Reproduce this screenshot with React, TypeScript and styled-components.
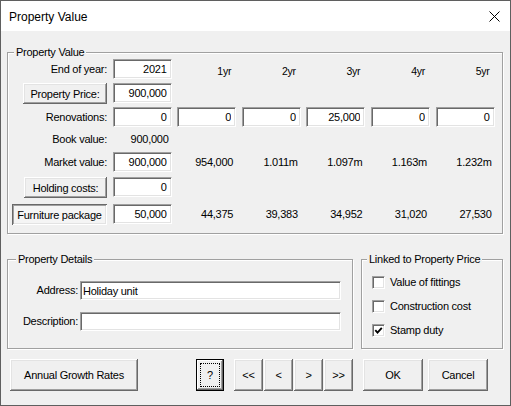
import React from "react";
import styled, { createGlobalStyle, css } from "styled-components";

const Global = createGlobalStyle`
  html, body { margin: 0; padding: 0; background: #ffffff; }
  body {
    font-family: "Liberation Sans", Arial, sans-serif;
    font-size: 11px;
    letter-spacing: -0.25px;
    color: #000;
  }
  *, *::before, *::after { box-sizing: border-box; }
`;

const Window = styled.div`
  width: 511px;
  height: 406px;
  border: 1px solid #5f5f5f;
  background: #f0f0f0;
  display: flex;
  flex-direction: column;
  overflow: hidden;
`;

const TitleBar = styled.div`
  height: 30px;
  flex: none;
  background: #ffffff;
  display: flex;
  align-items: center;
  justify-content: space-between;
  padding: 0 10px 0 8px;
`;

const Title = styled.span`
  font-size: 12px;
  line-height: 16px;
  letter-spacing: 0;
  padding-top: 1px;
`;

const CloseGlyph = styled.svg`
  display: block;
  width: 11px;
  height: 11px;
`;

const Body = styled.div`
  flex: 1;
  display: flex;
  flex-direction: column;
  padding: 15px 7px 0 6px;
`;

const Group = styled.fieldset<{ $w?: number; $fill?: boolean }>`
  margin: 0;
  padding: 0;
  min-width: 0;
  flex: none;
  border: 1px solid #a0a0a0;
  box-shadow: 1px 1px 0 #ffffff, inset 1px 1px 0 #ffffff;
  ${(p) =>
    p.$w &&
    css`
      width: ${p.$w}px;
    `}
  ${(p) =>
    p.$fill &&
    css`
      flex: 1;
    `}
`;

const Legend = styled.legend<{ $indent: number }>`
  margin-left: ${(p) => p.$indent}px;
  padding: 0 2px;
  font-size: 11px;
  line-height: 13px;
  background: #f0f0f0;
`;

const ValueGrid = styled.div`
  display: grid;
  grid-template-columns: 95px repeat(6, 59px);
  grid-template-rows: 24px 24px 24px 21px 25px 27px 21px;
  column-gap: 5.6px;
  align-items: start;
  padding: 0 6px 8px 4px;
`;

const FieldLabel = styled.span<{ $h?: number }>`
  display: block;
  height: ${(p) => p.$h ?? 20}px;
  line-height: ${(p) => p.$h ?? 20}px;
  text-align: right;
  white-space: nowrap;
`;

const YearHeading = styled.span`
  display: block;
  height: 20px;
  line-height: 20px;
  padding: 2px 5px 0 0;
  font-size: 10.5px;
  text-align: right;
`;

const Figure = styled.span<{ $h?: number }>`
  display: block;
  height: ${(p) => p.$h ?? 20}px;
  line-height: ${(p) => p.$h ?? 20}px;
  padding-right: 3px;
  text-align: right;
  white-space: nowrap;
`;

const sunken = css`
  border: 1px solid;
  border-color: #a0a0a0 #ffffff #ffffff #a0a0a0;
  box-shadow: inset 1px 1px 0 #696969, inset -1px -1px 0 #e3e3e3;
  background: #ffffff;
`;

const NumberBox = styled.input`
  ${sunken};
  display: block;
  width: 59px;
  height: 20px;
  padding: 0 4px 0 2px;
  margin: 0;
  font: inherit;
  letter-spacing: inherit;
  color: #000;
  text-align: right;
  outline: none;
`;

const raised = css`
  border: none;
  background: #f0f0f0;
  box-shadow: inset -1px -1px 0 #696969, inset 1px 1px 0 #ffffff,
    inset -2px -2px 0 #a0a0a0, inset 2px 2px 0 #e3e3e3;
`;

const LabelButton = styled.button<{ $w: number }>`
  ${raised};
  justify-self: end;
  width: ${(p) => p.$w}px;
  height: 21px;
  margin: 0;
  padding: 0 2px;
  font: inherit;
  letter-spacing: inherit;
  color: #000;
  white-space: nowrap;
`;

const ToggleButton = styled.button`
  justify-self: end;
  width: 95px;
  height: 21px;
  margin: 0;
  padding: 0 2px;
  font: inherit;
  letter-spacing: inherit;
  color: #000;
  border: none;
  background: #f5f5f5;
  box-shadow: inset 1px 1px 0 #696969, inset -1px -1px 0 #ffffff,
    inset 2px 2px 0 #a0a0a0, inset -2px -2px 0 #e3e3e3;
  white-space: nowrap;
`;

const LowerRow = styled.div`
  display: flex;
  gap: 8px;
  margin-top: 19px;
`;

const DetailsGrid = styled.div`
  display: grid;
  grid-template-columns: 1fr 261px;
  grid-auto-rows: 19px;
  row-gap: 12px;
  column-gap: 2px;
  padding: 15px 11px 17px 0;
`;

const TextBox = styled.input`
  ${sunken};
  display: block;
  width: 100%;
  height: 19px;
  margin: 0;
  padding: 0 2px;
  font: inherit;
  letter-spacing: inherit;
  color: #000;
  outline: none;
`;

const CheckList = styled.div`
  display: flex;
  flex-direction: column;
  gap: 8px;
  padding: 8px 0 10px 10px;
`;

const CheckRow = styled.label`
  display: flex;
  align-items: center;
  gap: 5px;
  height: 16px;
  white-space: nowrap;
`;

const CheckSquare = styled.span`
  ${sunken};
  width: 13px;
  height: 13px;
  flex: none;
  display: flex;
  align-items: center;
  justify-content: center;
`;

const ButtonBar = styled.div`
  display: flex;
  align-items: flex-start;
  margin-top: 10px;
  padding-left: 3px;
`;

const DialogButton = styled.button<{ $w: number }>`
  ${raised};
  width: ${(p) => p.$w}px;
  height: 32px;
  margin: 0;
  padding: 0;
  font: inherit;
  letter-spacing: inherit;
  color: #000;
  flex: none;
`;

const HelpButton = styled.button`
  width: 28px;
  height: 32px;
  margin: 0 0 0 58px;
  padding: 4px;
  border: none;
  background: #f0f0f0;
  box-shadow: inset 0 0 0 1px #000000, inset -2px -2px 0 #696969,
    inset 2px 2px 0 #ffffff, inset -3px -3px 0 #a0a0a0;
  font: inherit;
  color: #000;
  flex: none;
`;

const FocusRing = styled.span`
  display: flex;
  align-items: center;
  justify-content: center;
  width: 100%;
  height: 100%;
  border: 1px dotted #000;
`;

const NavGroup = styled.div`
  display: flex;
  gap: 1px;
  margin-left: 10px;
`;

const ActionGroup = styled.div`
  display: flex;
  gap: 5px;
  margin-left: 10px;
`;

const Empty = styled.span`
  display: block;
`;

const years = ["1yr", "2yr", "3yr", "4yr", "5yr"];
const renovations = ["0", "0", "0", "25,000", "0", "0"];
const market = ["954,000", "1.011m", "1.097m", "1.163m", "1.232m"];
const furniture = ["44,375", "39,383", "34,952", "31,020", "27,530"];

function Check({ checked, label }: { checked?: boolean; label: string }) {
  return (
    <CheckRow>
      <CheckSquare>
        {checked && (
          <svg width="9" height="9" viewBox="0 0 9 9">
            <path d="M1.3 4.2 L3.5 6.6 L7.8 1.9" fill="none" stroke="#000" strokeWidth="1.9" />
          </svg>
        )}
      </CheckSquare>
      {label}
    </CheckRow>
  );
}

export default function App() {
  return (
    <>
      <Global />
      <Window>
        <TitleBar>
          <Title>Property Value</Title>
          <CloseGlyph viewBox="0 0 11 11">
            <path d="M0.5 0.5 L10.5 10.5 M10.5 0.5 L0.5 10.5" stroke="#000" strokeWidth="1" />
          </CloseGlyph>
        </TitleBar>
        <Body>
          <Group>
            <Legend $indent={6}>Property Value</Legend>
            <ValueGrid>
              <FieldLabel>End of year:</FieldLabel>
              <NumberBox readOnly value="2021" />
              {years.map((y) => (
                <YearHeading key={y}>{y}</YearHeading>
              ))}

              <LabelButton $w={84}>Property Price:</LabelButton>
              <NumberBox readOnly value="900,000" />
              {years.map((y) => (
                <Empty key={y} />
              ))}

              <FieldLabel>Renovations:</FieldLabel>
              {renovations.map((v, i) => (
                <NumberBox key={i} readOnly value={v} />
              ))}

              <FieldLabel $h={17}>Book value:</FieldLabel>
              <Figure $h={17}>900,000</Figure>
              {years.map((y) => (
                <Empty key={y} />
              ))}

              <FieldLabel>Market value:</FieldLabel>
              <NumberBox readOnly value="900,000" />
              {market.map((v) => (
                <Figure key={v}>{v}</Figure>
              ))}

              <LabelButton $w={83}>Holding costs:</LabelButton>
              <NumberBox readOnly value="0" />
              {years.map((y) => (
                <Empty key={y} />
              ))}

              <ToggleButton>Furniture package</ToggleButton>
              <NumberBox readOnly value="50,000" />
              {furniture.map((v) => (
                <Figure key={v}>{v}</Figure>
              ))}
            </ValueGrid>
          </Group>

          <LowerRow>
            <Group $w={346}>
              <Legend $indent={8}>Property Details</Legend>
              <DetailsGrid>
                <FieldLabel $h={19}>Address:</FieldLabel>
                <TextBox readOnly value="Holiday unit" />
                <FieldLabel $h={19}>Description:</FieldLabel>
                <TextBox readOnly value="" />
              </DetailsGrid>
            </Group>
            <Group $fill>
              <Legend $indent={5}>Linked to Property Price</Legend>
              <CheckList>
                <Check label="Value of fittings" />
                <Check label="Construction cost" />
                <Check checked label="Stamp duty" />
              </CheckList>
            </Group>
          </LowerRow>

          <ButtonBar>
            <DialogButton $w={128}>Annual Growth Rates</DialogButton>
            <HelpButton>
              <FocusRing>?</FocusRing>
            </HelpButton>
            <NavGroup>
              <DialogButton $w={29}>&lt;&lt;</DialogButton>
              <DialogButton $w={29}>&lt;</DialogButton>
              <DialogButton $w={29}>&gt;</DialogButton>
              <DialogButton $w={29}>&gt;&gt;</DialogButton>
            </NavGroup>
            <ActionGroup>
              <DialogButton $w={60}>OK</DialogButton>
              <DialogButton $w={60}>Cancel</DialogButton>
            </ActionGroup>
          </ButtonBar>
        </Body>
      </Window>
    </>
  );
}
